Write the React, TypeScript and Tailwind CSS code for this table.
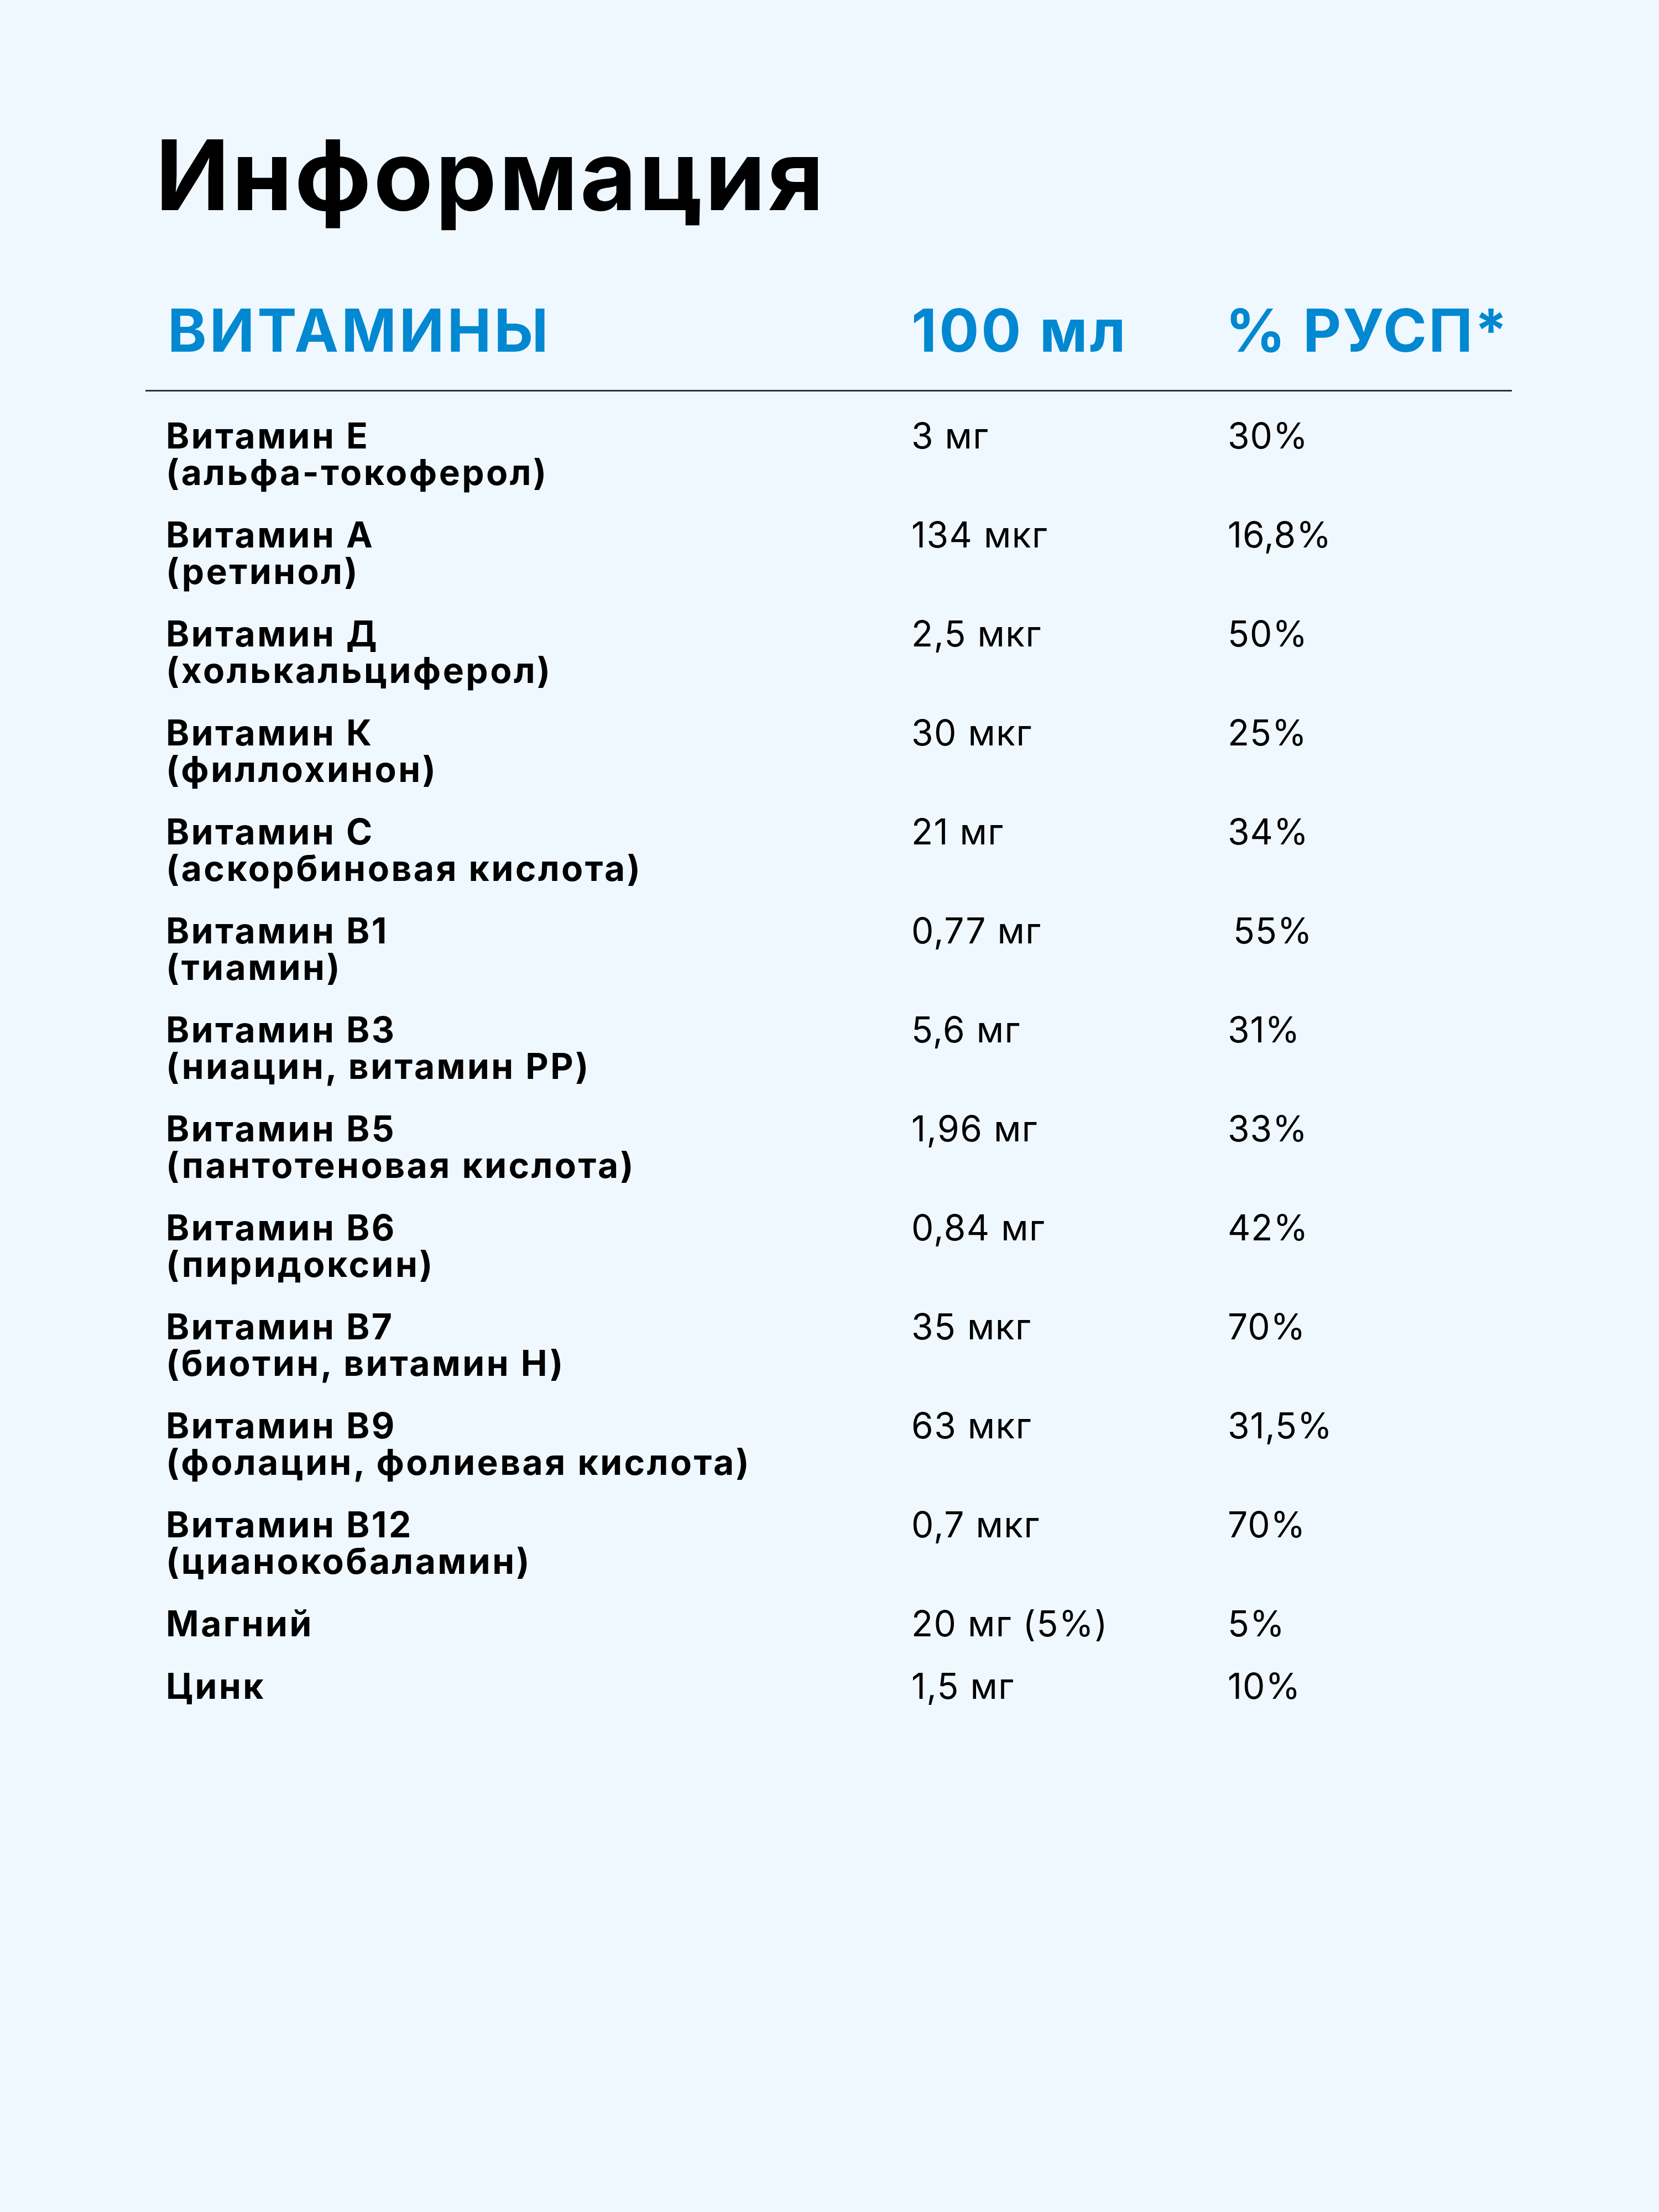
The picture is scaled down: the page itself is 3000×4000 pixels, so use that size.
import React from "react";

type Row = { name: string; sub?: string; amount: string; pct: string; pctIndent?: boolean };

const rows: Row[] = [
  { name: "Витамин Е", sub: "(альфа-токоферол)", amount: "3 мг", pct: "30%" },
  { name: "Витамин А", sub: "(ретинол)", amount: "134 мкг", pct: "16,8%" },
  { name: "Витамин Д", sub: "(холькальциферол)", amount: "2,5 мкг", pct: "50%" },
  { name: "Витамин К", sub: "(филлохинон)", amount: "30 мкг", pct: "25%" },
  { name: "Витамин С", sub: "(аскорбиновая кислота)", amount: "21 мг", pct: "34%" },
  { name: "Витамин В1", sub: "(тиамин)", amount: "0,77 мг", pct: "55%", pctIndent: true },
  { name: "Витамин В3", sub: "(ниацин, витамин РР)", amount: "5,6 мг", pct: "31%" },
  { name: "Витамин В5", sub: "(пантотеновая кислота)", amount: "1,96 мг", pct: "33%" },
  { name: "Витамин В6", sub: "(пиридоксин)", amount: "0,84 мг", pct: "42%" },
  { name: "Витамин В7", sub: "(биотин, витамин Н)", amount: "35 мкг", pct: "70%" },
  { name: "Витамин В9", sub: "(фолацин, фолиевая кислота)", amount: "63 мкг", pct: "31,5%" },
  { name: "Витамин В12", sub: "(цианокобаламин)", amount: "0,7 мкг", pct: "70%" },
  { name: "Магний", amount: "20 мг (5%)", pct: "5%" },
  { name: "Цинк", amount: "1,5 мг", pct: "10%" },
];

export default function App() {
  return (
    <div className="w-[3000px] h-[4000px] bg-[#f0f8ff] font-['Inter','Noto_Sans',sans-serif] text-black">
      <div className="pl-[300px] pt-[228px]">
        <h1 className="-ml-[19px] text-[176px] leading-none font-bold tracking-[4px]">Информация</h1>

        <div className="mt-[140px] flex text-[107px] leading-none font-bold text-[#0288d1] tracking-[4px]">
          <div className="w-[1348px] pl-[3px] tracking-[5px]">ВИТАМИНЫ</div>
          <div className="w-[572px]">100 мл</div>
          <div className="-ml-[4px] tracking-[3px]">% РУСП*</div>
        </div>

        <div className="mt-[54px] -ml-[37px] w-[2471px] h-[3px] bg-[#333]" />

        <div className="mt-[47px] flex flex-col gap-[47px] text-[64px] leading-[66px]">
          {rows.map((r) => (
            <div key={r.name} className="flex">
              <div className="w-[1348px] font-bold tracking-[3.5px]">
                <div>{r.name}</div>
                {r.sub && <div>{r.sub}</div>}
              </div>
              <div className="w-[572px] font-normal tracking-[1.5px]">{r.amount}</div>
              <div className={r.pctIndent ? "pl-[10px] font-normal tracking-[1px]" : "font-normal tracking-[1px]"}>{r.pct}</div>
            </div>
          ))}
        </div>
      </div>
    </div>
  );
}
